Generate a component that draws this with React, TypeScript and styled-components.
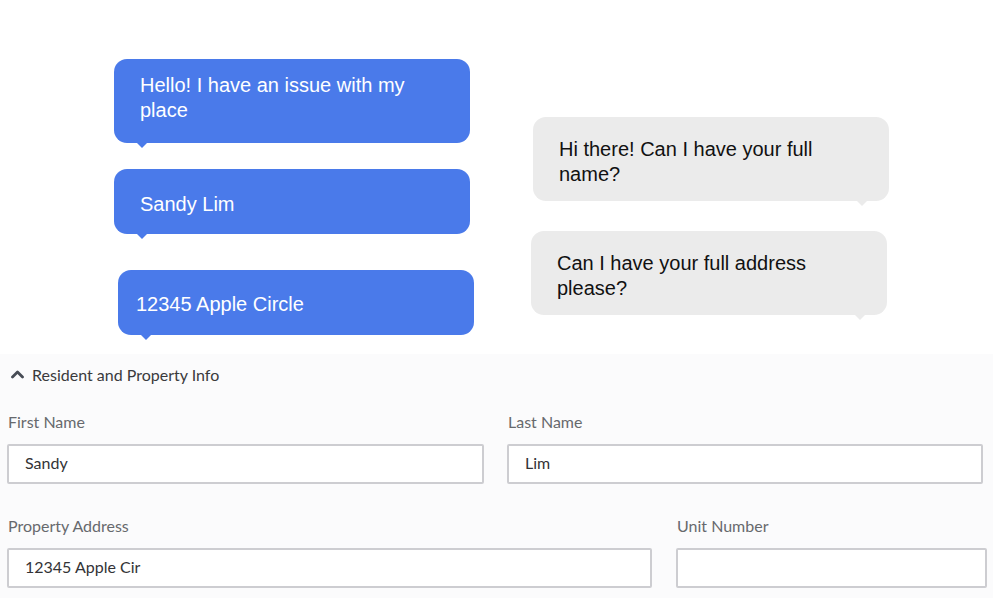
import React from 'react';
import styled, { createGlobalStyle } from 'styled-components';

const Global = createGlobalStyle`
  html, body { margin: 0; padding: 0; background: #ffffff; }
  body { width: 1000px; height: 598px; overflow: hidden; }
  * { box-sizing: border-box; }
`;

const Page = styled.div`
  width: 1000px;
  height: 598px;
  display: flex;
  flex-direction: column;
  background: #ffffff;
`;

const Chat = styled.section`
  height: 354px;
  display: flex;
  align-items: flex-start;
  padding-left: 114px;
  font-family: 'Liberation Sans', Arial, sans-serif;
`;

const Column = styled.div<{ $top: number; $left: number }>`
  display: flex;
  flex-direction: column;
  width: 356px;
  padding-top: ${p => p.$top}px;
  margin-left: ${p => p.$left}px;
`;

const Bubble = styled.div<{
  $me?: boolean;
  $h: number;
  $mt?: number;
  $ml?: number;
  $pt: number;
  $pl?: number;
}>`
  position: relative;
  width: 356px;
  height: ${p => p.$h}px;
  margin-top: ${p => p.$mt ?? 0}px;
  margin-left: ${p => p.$ml ?? 0}px;
  padding: ${p => p.$pt}px 40px 0 ${p => p.$pl ?? 26}px;
  border-radius: 13px;
  background: ${p => (p.$me ? '#4a7aea' : '#ebebeb')};
  color: ${p => (p.$me ? '#ffffff' : '#111111')};
  font-size: 20px;
  line-height: 25px;

  &::after {
    content: '';
    position: absolute;
    bottom: -5px;
    ${p => (p.$me ? 'left: 23px;' : 'right: 22px;')}
    width: 0;
    height: 0;
    border-left: 5px solid transparent;
    border-right: 5px solid transparent;
    border-top: 5px solid ${p => (p.$me ? '#4a7aea' : '#ebebeb')};
  }
`;

const Panel = styled.section`
  width: 993px;
  height: 244px;
  background: #fbfbfc;
  font-family: Lato, 'Open Sans', sans-serif;
  padding-top: 10px;
`;

const Header = styled.div`
  display: flex;
  align-items: center;
  gap: 8px;
  height: 20px;
  padding-left: 11px;
  font-size: 16px;
  color: #3a3a3c;
`;

const Row = styled.div<{ $mt: number; $cols: string; $gap: number }>`
  display: grid;
  grid-template-columns: ${p => p.$cols};
  column-gap: ${p => p.$gap}px;
  margin-top: ${p => p.$mt}px;
  padding-left: 7px;
`;

const Field = styled.label`
  display: flex;
  flex-direction: column;
  gap: 12px;
`;

const Label = styled.span`
  font-size: 16px;
  line-height: 20px;
  color: #67696d;
  padding-left: 1px;
`;

const Input = styled.input`
  height: 40px;
  width: 100%;
  border: 2px solid #cdcdd1;
  border-radius: 2px;
  background: #ffffff;
  padding: 0 0 3px 16px;
  font-family: Lato, 'Open Sans', sans-serif;
  font-size: 16px;
  color: #333336;
  outline: none;
`;

const Chevron = () => (
  <svg width="13" height="10" viewBox="0 0 13 10">
    <polyline
      points="1.5,8 6.5,3 11.5,8"
      fill="none"
      stroke="#474c55"
      strokeWidth="2.8"
      strokeLinejoin="round"
      strokeLinecap="round"
    />
  </svg>
);

export default function App() {
  return (
    <Page>
      <Global />
      <Chat>
        <Column $top={59} $left={0}>
          <Bubble $me $h={84} $pt={14}>Hello! I have an issue with my place</Bubble>
          <Bubble $me $h={65} $mt={26} $pt={23}>Sandy Lim</Bubble>
          <Bubble $me $h={65} $mt={36} $ml={4} $pt={22} $pl={18}>12345 Apple Circle</Bubble>
        </Column>
        <Column $top={117} $left={63}>
          <Bubble $h={84} $pt={20}>Hi there! Can I have your full name?</Bubble>
          <Bubble $h={84} $mt={30} $ml={-2} $pt={20}>Can I have your full address please?</Bubble>
        </Column>
      </Chat>
      <Panel>
        <Header>
          <Chevron />
          <span>Resident and Property Info</span>
        </Header>
        <Row $mt={28} $cols="477px 476px" $gap={23}>
          <Field>
            <Label>First Name</Label>
            <Input readOnly value="Sandy" />
          </Field>
          <Field>
            <Label>Last Name</Label>
            <Input readOnly value="Lim" />
          </Field>
        </Row>
        <Row $mt={32} $cols="645px 311px" $gap={24}>
          <Field>
            <Label>Property Address</Label>
            <Input readOnly value="12345 Apple Cir" />
          </Field>
          <Field>
            <Label>Unit Number</Label>
            <Input readOnly value="" />
          </Field>
        </Row>
      </Panel>
    </Page>
  );
}
